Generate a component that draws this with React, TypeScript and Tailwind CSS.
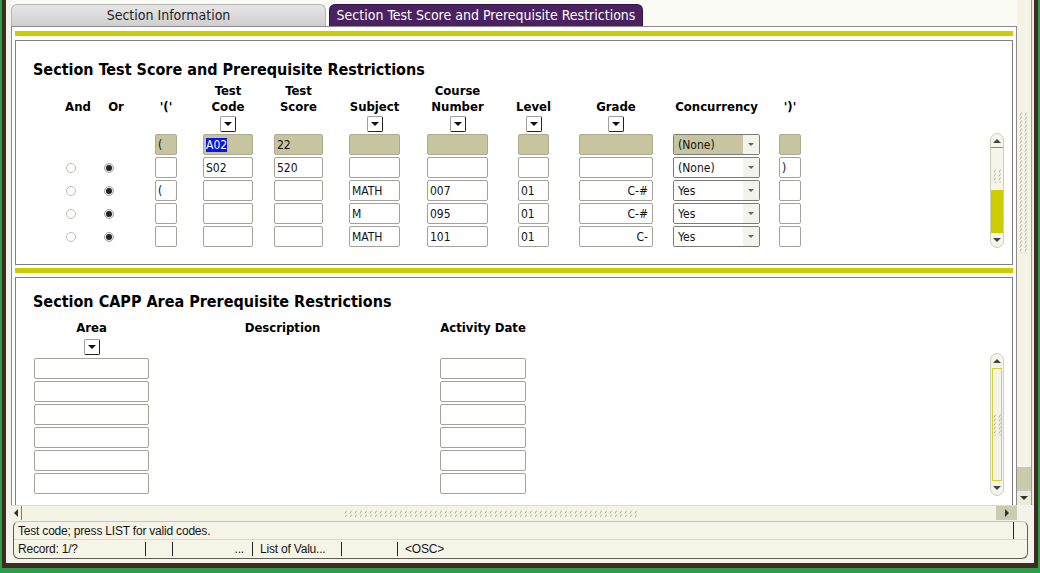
import React from 'react';

const F = "font-['DejaVu_Sans_Condensed','Liberation_Sans',sans-serif]";

type Col = { id: string; box: string; h1?: string; h2: string; dd?: boolean };

const cols: Col[] = [
  { id: 'and', box: 'ml-[40px] w-[44px]', h2: 'And' },
  { id: 'or', box: 'w-[32px]', h2: 'Or' },
  { id: 'lp', box: 'ml-[23px] w-[22px]', h2: "'('" },
  { id: 'code', box: 'ml-[26px] w-[50px]', h1: 'Test', h2: 'Code', dd: true },
  { id: 'score', box: 'ml-[21px] w-[49px]', h1: 'Test', h2: 'Score' },
  { id: 'subj', box: 'ml-[26px] w-[51px]', h2: 'Subject', dd: true },
  { id: 'crse', box: 'ml-[27px] w-[61px]', h1: 'Course', h2: 'Number', dd: true },
  { id: 'levl', box: 'ml-[30px] w-[31px]', h2: 'Level', dd: true },
  { id: 'grade', box: 'ml-[30px] w-[74px]', h2: 'Grade', dd: true },
  { id: 'conc', box: 'ml-[20px] w-[87px]', h2: 'Concurrency' },
  { id: 'rp', box: 'ml-[19px] w-[22px]', h2: "')'" },
];

const rows = [
  { hl: true, radio: false, v: ['(', 'A02', '22', '', '', '', '', '(None)', ''] },
  { hl: false, radio: true, v: ['', 'S02', '520', '', '', '', '', '(None)', ')'] },
  { hl: false, radio: true, v: ['(', '', '', 'MATH', '007', '01', 'C-#', 'Yes', ''] },
  { hl: false, radio: true, v: ['', '', '', 'M', '095', '01', 'C-#', 'Yes', ''] },
  { hl: false, radio: true, v: ['', '', '', 'MATH', '101', '01', 'C-', 'Yes', ''] },
];

const capp = [
  { id: 'area', box: 'ml-[18px] w-[115px]', h: 'Area', dd: true },
  { id: 'desc', box: 'ml-[21px] w-[225px]', h: 'Description' },
  { id: 'date', box: 'ml-[45px] w-[86px]', h: 'Activity Date' },
];

const Down = ({ c = 'border-t-[#111]' }: { c?: string }) => (
  <div className={`w-0 h-0 border-l-[4px] border-r-[4px] border-t-[4px] border-l-transparent border-r-transparent ${c}`} />
);
const Up = () => (
  <div className="w-0 h-0 border-l-[4px] border-r-[4px] border-b-[4px] border-l-transparent border-r-transparent border-b-[#444]" />
);

const Grip = ({ w, h, id }: { w: number; h: number; id: string }) => (
  <svg width={w} height={h} className="block">
    <defs>
      <pattern id={id} width="5" height="4" patternUnits="userSpaceOnUse">
        <path d="M1 3.5 L2.6 0.6" stroke="#acab98" strokeWidth="0.9" />
      </pattern>
    </defs>
    <rect width={w} height={h} fill={`url(#${id})`} />
  </svg>
);

const DD = () => (
  <div className="w-[16px] h-[16px] rounded-[2px] bg-white border border-[#a0a0a0] border-r-[#222] border-b-[#222] flex items-center justify-center">
    <Down />
  </div>
);

const Radio = ({ on = false }: { on?: boolean }) =>
  on ? (
    <div className="w-[10px] h-[10px] rounded-full border border-[#a8a8a8] bg-[#e6e6e6] flex items-center justify-center">
      <div className="w-[6px] h-[6px] rounded-full bg-[#222]" />
    </div>
  ) : (
    <div className="w-[10px] h-[10px] rounded-full border border-[#bdbdb5] bg-white" />
  );

const Field = ({ value = '', hl = false, right = false, sel = false }: { value?: string; hl?: boolean; right?: boolean; sel?: boolean }) => (
  <div
    className={`h-[21px] w-full rounded-[2px] border flex items-center text-[12px] text-[#111] whitespace-nowrap overflow-hidden ${
      hl ? 'bg-[#c7c5a0] border-[#aeac8e]' : 'bg-white border-[#a3a39c]'
    } ${right ? 'justify-end pr-[4px]' : 'pl-[2px]'}`}
  >
    {sel ? <span className="bg-[#0a14f0] text-white leading-[14px]">{value}</span> : value}
  </div>
);

const Select = ({ value, hl }: { value: string; hl: boolean }) => (
  <div className="h-[21px] w-full flex rounded-[2px] border border-[#7c7c76] overflow-hidden">
    <div className={`flex-1 flex items-center pl-[4px] text-[12px] text-[#111] ${hl ? 'bg-[#c7c5a0]' : 'bg-white'}`}>{value}</div>
    <div className="w-[16px] bg-[#f3f3ee] flex items-center justify-center">
      <div className="w-0 h-0 border-l-[3px] border-r-[3px] border-t-[3px] border-l-transparent border-r-transparent border-t-[#666]" />
    </div>
  </div>
);

const BlockOne = () => (
  <div className="h-[225px] border border-[#808080] bg-white flex flex-col">
    <div className="ml-[17px] mt-[20px] h-[18px] leading-[18px] text-[16px] font-bold text-black">
      Section Test Score and Prerequisite Restrictions
    </div>
    <div className="mt-[4px] h-[32px] flex text-[13px] font-bold leading-[16px] text-black">
      {cols.map((c) => (
        <div key={c.id} className={`${c.box} flex flex-col items-center justify-end whitespace-nowrap`}>
          {c.h1 && <span>{c.h1}</span>}
          <span>{c.h2}</span>
        </div>
      ))}
    </div>
    <div className="mt-[1px] h-[16px] flex">
      {cols.map((c) => (
        <div key={c.id} className={`${c.box} flex justify-center`}>{c.dd && <DD />}</div>
      ))}
    </div>
    <div className="mt-[1px] flex items-start">
      <div className="flex-1 pt-[1px] flex flex-col gap-[2px]">
        {rows.map((r, ri) => (
          <div key={ri} className="h-[21px] flex items-center">
            <div className="ml-[40px] w-[44px] pl-[10px]">{r.radio && <Radio />}</div>
            <div className="w-[32px] pl-[4px]">{r.radio && <Radio on />}</div>
            {cols.slice(2).map((c, ci) => (
              <div key={c.id} className={c.box}>
                {c.id === 'conc' ? (
                  <Select value={r.v[ci]} hl={r.hl} />
                ) : (
                  <Field value={r.v[ci]} hl={r.hl} right={c.id === 'grade'} sel={r.hl && c.id === 'code'} />
                )}
              </div>
            ))}
          </div>
        ))}
      </div>
      <div className="mr-[8px] w-[14px] h-[115px] rounded-[7px] border border-[#cfcfbc] bg-[#f5f5ea] flex flex-col overflow-hidden">
        <div className="h-[14px] flex items-center justify-center border-b border-[#8a8a80]"><Up /></div>
        <div className="h-[42px] flex items-center justify-center pt-[14px]"><Grip w={8} h={14} id="gs1" /></div>
        <div className="h-[43px] bg-[#cccc00]" />
        <div className="flex-1 flex items-center justify-center"><Down c="border-t-[#444]" /></div>
      </div>
    </div>
  </div>
);

const BlockTwo = () => (
  <div className="flex-1 border border-b-0 border-[#808080] bg-white flex flex-col">
    <div className="ml-[17px] mt-[15px] h-[18px] leading-[18px] text-[16px] font-bold text-black">
      Section CAPP Area Prerequisite Restrictions
    </div>
    <div className="flex items-start">
      <div className="flex-1 flex flex-col">
        <div className="mt-[9px] h-[16px] flex text-[13px] font-bold leading-[16px] text-black">
          {capp.map((c) => (
            <div key={c.id} className={`${c.box} flex justify-center whitespace-nowrap`}>{c.h}</div>
          ))}
        </div>
        <div className="mt-[3px] h-[16px] flex">
          {capp.map((c) => (
            <div key={c.id} className={`${c.box} flex justify-center`}>{c.dd && <DD />}</div>
          ))}
        </div>
        <div className="mt-[3px] flex flex-col gap-[2px]">
          {[0, 1, 2, 3, 4, 5].map((i) => (
            <div key={i} className="h-[21px] flex">
              {capp.map((c) => (
                <div key={c.id} className={c.box}>{c.id !== 'desc' && <Field />}</div>
              ))}
            </div>
          ))}
        </div>
      </div>
      <div className="mt-[42px] mr-[8px] w-[14px] h-[143px] rounded-[7px] border border-[#cfcfbc] bg-[#f5f5ea] flex flex-col overflow-hidden">
        <div className="h-[14px] flex items-center justify-center"><Up /></div>
        <div className="flex-1 mx-[1px] border border-[#d4d430] bg-[#f4f4e6] flex items-center justify-center">
          <Grip w={8} h={22} id="gs2" />
        </div>
        <div className="h-[14px] flex items-center justify-center"><Down c="border-t-[#444]" /></div>
      </div>
    </div>
  </div>
);

export default function App() {
  return (
    <div className={`w-[1040px] h-[573px] overflow-hidden bg-[#2f9b4d] pl-[2px] pr-[2px] pb-[5px] flex ${F}`}>
      <div className="flex-1 bg-[#3d2c22] pl-[4px] pr-[4px] pb-[5px] flex">
        <div className="flex-1 bg-[#f3f3ec] flex flex-col">
          <div className="h-[505px] flex">
            <div className="w-[5px]" />
            <div className="w-[1006px] flex flex-col bg-[#fbfbf6]">
              <div className="h-[26px] pt-[4px] flex items-end">
                <div className="w-[315px] h-[22px] rounded-t-[6px] border border-b-0 border-[#b4b4b4] bg-gradient-to-b from-[#e6e6e6] to-[#cfcfcf] flex items-center justify-center text-[14px] text-[#1e1e1e]">
                  Section Information
                </div>
                <div className="ml-[3px] w-[314px] h-[22px] rounded-t-[6px] border border-b-0 border-[#35124a] bg-[#4a2161] flex items-center justify-center text-[14px] text-white whitespace-nowrap">
                  Section Test Score and Prerequisite Restrictions
                </div>
              </div>
              <div className="flex-1 border border-b-0 border-[#8c8c8c] bg-white px-[3px] pt-[4px] flex flex-col">
                <div className="h-[5px] bg-[#cccc00]" />
                <div className="mt-[4px]"><BlockOne /></div>
                <div className="mt-[3px] h-[5px] bg-[#cccc00]" />
                <div className="mt-[4px] flex-1 flex flex-col"><BlockTwo /></div>
              </div>
            </div>
            <div className="w-[14px] bg-[#f4f3e4] flex flex-col items-center">
              <div className="h-[112px]" />
              <Grip w={10} h={141} id="gmain" />
              <div className="flex-1" />
              <div className="w-full h-[24px] bg-[#cacaae]" />
              <div className="w-full h-[14px] bg-[#ecebd9] flex items-center justify-center"><Down c="border-t-[#333]" /></div>
            </div>
            <div className="flex-1 border-l border-[#9a9a90] bg-[#e9e9e1]" />
          </div>
          <div className="ml-[5px] w-[1006px] h-[15px] flex bg-[#f4f3e4] border-t border-[#dcdccc]">
            <div className="w-[11px] flex items-center justify-center border-r border-[#777]">
              <div className="w-0 h-0 border-t-[4px] border-b-[4px] border-r-[4px] border-t-transparent border-b-transparent border-r-[#333]" />
            </div>
            <div className="flex-1 flex items-center">
              <div className="ml-[322px]"><Grip w={295} h={7} id="ghor" /></div>
            </div>
            <div className="w-[21px] bg-[#cbcbb0] flex items-center justify-center">
              <div className="w-0 h-0 border-t-[4px] border-b-[4px] border-l-[4px] border-t-transparent border-b-transparent border-l-[#333]" />
            </div>
          </div>
          <div className="ml-[7px] mt-[1px] w-[1015px] h-[38px] rounded-[6px] border border-[#5e5e55] border-t-[#c4c4b4] bg-[#f5f4e6] flex flex-col text-[12px] text-[#161616] font-['Liberation_Sans',sans-serif]">
            <div className="h-[18px] flex items-center border-b border-[#d8d8c8]">
              <span className="pl-[4px] flex-1 tracking-[-0.2px]">Test code; press LIST for valid codes.</span>
              <div className="w-px h-[17px] bg-[#222] mr-[13px]" />
            </div>
            <div className="flex-1 flex items-center tracking-[-0.2px]">
              <div className="w-[131px] pl-[4px]">Record: 1/?</div>
              <div className="w-px h-[14px] bg-[#222]" />
              <div className="w-[26px]" />
              <div className="w-px h-[14px] bg-[#222]" />
              <div className="w-[79px] text-right pr-[8px]">...</div>
              <div className="w-px h-[14px] bg-[#222]" />
              <div className="w-[88px] pl-[7px] whitespace-nowrap">List of Valu...</div>
              <div className="w-px h-[14px] bg-[#222]" />
              <div className="w-[55px]" />
              <div className="w-px h-[14px] bg-[#222]" />
              <div className="pl-[7px]">&lt;OSC&gt;</div>
            </div>
          </div>
        </div>
      </div>
    </div>
  );
}
